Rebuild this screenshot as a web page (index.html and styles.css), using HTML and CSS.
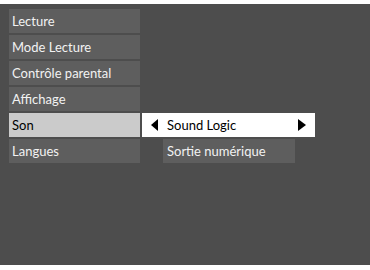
FILE: index.html
```html
<!DOCTYPE html>
<html lang="fr">

<head>
  <meta charset="UTF-8" />
  <title>Menu Réglages</title>
  <link rel="stylesheet" href="styles.css">
</head>

<body>
  <div class="ecran">
    <ul class="menu">
      <li class="item">Lecture</li>
      <li class="item">Mode Lecture</li>
      <li class="item">Contrôle parental</li>
      <li class="item">Affichage</li>
      <li class="item actif">Son</li>
      <li class="item">Langues</li>
    </ul>

    <div class="sous-menu">
      <div class="choix">
        <span class="fleche gauche"></span>
        <span class="choix-texte">Sound Logic</span>
        <span class="fleche droite"></span>
      </div>
      <div class="option">Sortie numérique</div>
    </div>
  </div>
</body>

</html>
```

FILE: styles.css
```css
:root {
  --fond: #4d4d4d;
  --item: #5e5e5e;
  --actif: #cbcbcb;
  --texte: #f2f2f2;
}

* {
  box-sizing: border-box;
}

body {
  margin: 0;
  background: #ffffff;
  font-family: Lato, "Open Sans", sans-serif;
  font-size: 13px;
}

.ecran {
  display: flex;
  margin-top: 4px;
  height: 261px;
  padding: 5px 0 0 9px;
  background: var(--fond);
}

.menu {
  list-style: none;
  margin: 0;
  padding: 0;
  width: 131px;
  display: flex;
  flex-direction: column;
  gap: 2px;
}

.item {
  height: 24px;
  line-height: 24px;
  padding-left: 3px;
  background: var(--item);
  color: var(--texte);
  white-space: nowrap;
}

.item.actif {
  background: var(--actif);
  color: #000;
}

.sous-menu {
  margin-left: 2px;
  padding-top: 104px;
  display: flex;
  flex-direction: column;
  gap: 2px;
}

.choix {
  display: flex;
  align-items: center;
  width: 173px;
  height: 24px;
  background: #fff;
  color: #000;
  padding: 0 9px 0 9px;
}

.choix-texte {
  flex: 1;
  margin-left: 9px;
}

.fleche {
  width: 0;
  height: 0;
  border-top: 6px solid transparent;
  border-bottom: 6px solid transparent;
}

.fleche.gauche {
  border-right: 7px solid #000;
}

.fleche.droite {
  border-left: 8px solid #000;
}

.option {
  margin-left: 21px;
  width: 132px;
  height: 24px;
  line-height: 24px;
  padding-left: 4px;
  background: var(--item);
  color: var(--texte);
}
```
